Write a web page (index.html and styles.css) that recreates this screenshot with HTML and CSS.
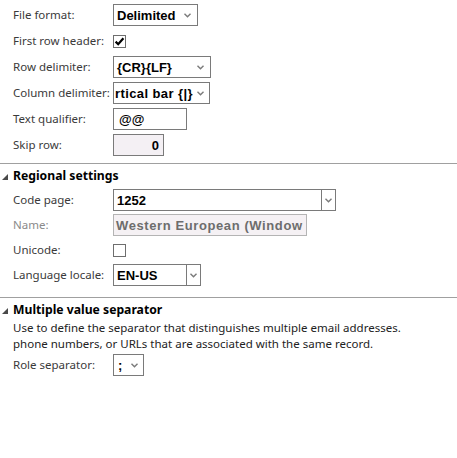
FILE: index.html
```html
<!DOCTYPE html>
<html>
<head>
<meta charset="utf-8">
<link rel="stylesheet" href="styles.css">
</head>
<body>
<div class="page">
  <section class="group group-first">
    <div class="form form-top">
      <div class="row">
        <span class="label">File format:</span>
        <div class="select w-format">
          <span class="value">Delimited</span>
          <span class="arrow"><svg width="7" height="5" viewBox="0 0 7 5"><path d="M0.5 0.8 L3.5 3.8 L6.5 0.8" fill="none" stroke="#7a7a7a" stroke-width="1.4"/></svg></span>
        </div>
      </div>
      <div class="row">
        <span class="label">First row header:</span>
        <span class="check"><svg width="11" height="11" viewBox="0 0 11 11"><path d="M1.6 5.6 L4.2 8.2 L9.4 2.2" fill="none" stroke="#000" stroke-width="2.2"/></svg></span>
      </div>
      <div class="row">
        <span class="label">Row delimiter:</span>
        <div class="select w-rowdelim">
          <span class="value">{CR}{LF}</span>
          <span class="arrow"><svg width="7" height="5" viewBox="0 0 7 5"><path d="M0.5 0.8 L3.5 3.8 L6.5 0.8" fill="none" stroke="#7a7a7a" stroke-width="1.4"/></svg></span>
        </div>
      </div>
      <div class="row">
        <span class="label">Column delimiter:</span>
        <div class="select w-coldelim">
          <span class="value value-scrolled">rtical bar {|}</span>
          <span class="arrow"><svg width="7" height="5" viewBox="0 0 7 5"><path d="M0.5 0.8 L3.5 3.8 L6.5 0.8" fill="none" stroke="#7a7a7a" stroke-width="1.4"/></svg></span>
        </div>
      </div>
      <div class="row">
        <span class="label">Text qualifier:</span>
        <div class="input w-qualifier"><span class="value">@@</span></div>
      </div>
      <div class="row">
        <span class="label">Skip row:</span>
        <div class="input input-num w-skip"><span class="value">0</span></div>
      </div>
    </div>
  </section>

  <hr class="divider divider-1">

  <section class="group">
    <h2 class="group-title"><svg class="tri" width="6" height="6" viewBox="0 0 6 6"><polygon points="6,0 6,6 0,6" fill="#4a4a4a"/></svg>Regional settings</h2>
    <div class="form form-regional">
      <div class="row">
        <span class="label">Code page:</span>
        <div class="select w-codepage">
          <span class="value">1252</span>
          <span class="arrow arrow-split"><svg width="7" height="5" viewBox="0 0 7 5"><path d="M0.5 0.8 L3.5 3.8 L6.5 0.8" fill="none" stroke="#7a7a7a" stroke-width="1.4"/></svg></span>
        </div>
      </div>
      <div class="row">
        <span class="label label-disabled">Name:</span>
        <div class="input input-disabled w-name"><span class="value">Western European (Window</span></div>
      </div>
      <div class="row">
        <span class="label">Unicode:</span>
        <span class="check"></span>
      </div>
      <div class="row">
        <span class="label">Language locale:</span>
        <div class="select w-locale">
          <span class="value">EN-US</span>
          <span class="arrow arrow-split"><svg width="7" height="5" viewBox="0 0 7 5"><path d="M0.5 0.8 L3.5 3.8 L6.5 0.8" fill="none" stroke="#7a7a7a" stroke-width="1.4"/></svg></span>
        </div>
      </div>
    </div>
  </section>

  <hr class="divider divider-2">

  <section class="group">
    <h2 class="group-title"><svg class="tri" width="6" height="6" viewBox="0 0 6 6"><polygon points="6,0 6,6 0,6" fill="#4a4a4a"/></svg>Multiple value separator</h2>
    <p class="desc">Use to define the separator that distinguishes multiple email addresses.<br>phone numbers, or URLs that are associated with the same record.</p>
    <div class="form">
      <div class="row">
        <span class="label">Role separator:</span>
        <div class="select w-role">
          <span class="value">;</span>
          <span class="arrow"><svg width="7" height="5" viewBox="0 0 7 5"><path d="M0.5 0.8 L3.5 3.8 L6.5 0.8" fill="none" stroke="#7a7a7a" stroke-width="1.4"/></svg></span>
        </div>
      </div>
    </div>
  </section>
</div>
</body>
</html>
```

FILE: styles.css
```css
* { box-sizing: border-box; }

html, body {
  margin: 0;
  padding: 0;
  background: #ffffff;
}

.page {
  width: 457px;
  height: 458px;
  font-family: "Noto Sans", "Open Sans", sans-serif;
  font-size: 11.5px;
  color: #333333;
}

.form {
  display: flex;
  flex-direction: column;
  gap: 4px;
}

.form-top {
  padding-top: 4px;
}

.form-regional {
  gap: 3px;
}

.row {
  display: grid;
  grid-template-columns: 100px auto;
  align-items: center;
  justify-items: start;
  height: 22px;
  padding-left: 13px;
}

.label {
  white-space: nowrap;
  color: #3a3a3a;
  line-height: 16px;
}

.label-disabled {
  color: #8a8a8a;
}

.select,
.input {
  display: flex;
  align-items: center;
  height: 22px;
  border: 1px solid #7a7a7a;
  background: #ffffff;
  font-family: "Liberation Sans", Arial, sans-serif;
  font-weight: bold;
  font-size: 13px;
  color: #000000;
}

.value {
  flex: 1;
  min-width: 0;
  padding-left: 3px;
  white-space: nowrap;
}

.value-scrolled {
  padding-left: 1px;
  letter-spacing: 0.4px;
}

.arrow {
  flex: none;
  display: flex;
  align-items: center;
  justify-content: center;
  width: 20px;
  height: 100%;
}

.arrow svg {
  display: block;
}

.arrow-split {
  width: 14px;
  border-left: 1px solid #7a7a7a;
}

.w-format { width: 85px; }
.w-rowdelim { width: 98px; }
.w-coldelim { width: 97px; }
.w-coldelim .arrow { width: 17px; }
.w-qualifier { width: 74px; }
.w-qualifier .value { padding-left: 5px; }
.w-skip { width: 51px; }
.w-codepage { width: 223px; }
.w-name { width: 194px; }
.w-locale { width: 88px; }
.w-role { width: 31px; }
.w-role .value { padding-left: 4px; }
.w-role .arrow { width: 12px; justify-content: flex-start; }

.input-num {
  background: #f4f0f4;
}

.input-num .value {
  text-align: right;
  padding-right: 4px;
}

.input-disabled {
  background: #f5f1f4;
  border-color: #b4b4b4;
  color: #6d6d6d;
}

.input-disabled .value {
  padding-left: 2px;
  letter-spacing: 0.6px;
}

.check {
  display: flex;
  align-items: center;
  justify-content: center;
  width: 13px;
  height: 13px;
  border: 1px solid #6e6e6e;
  background: #ffffff;
}

.check svg {
  display: block;
}

.divider {
  border: 0;
  height: 1px;
  background: #a0a0a0;
  margin: 0;
}

.divider-1 { margin-top: 7px; }
.divider-2 { margin-top: 11px; }

.group-title {
  display: flex;
  align-items: center;
  margin: 3px 0 0 0;
  padding-left: 2px;
  height: 16px;
  font-family: "Noto Sans", "Open Sans", sans-serif;
  font-size: 12.2px;
  font-weight: bold;
  color: #000000;
}

.group-title .tri {
  margin-right: 5px;
  margin-top: 3px;
}

.group-title + .form-regional {
  margin-top: 6px;
}

.desc {
  margin: 3px 0 2px 0;
  padding-left: 13px;
  line-height: 16px;
  color: #222222;
}
```
